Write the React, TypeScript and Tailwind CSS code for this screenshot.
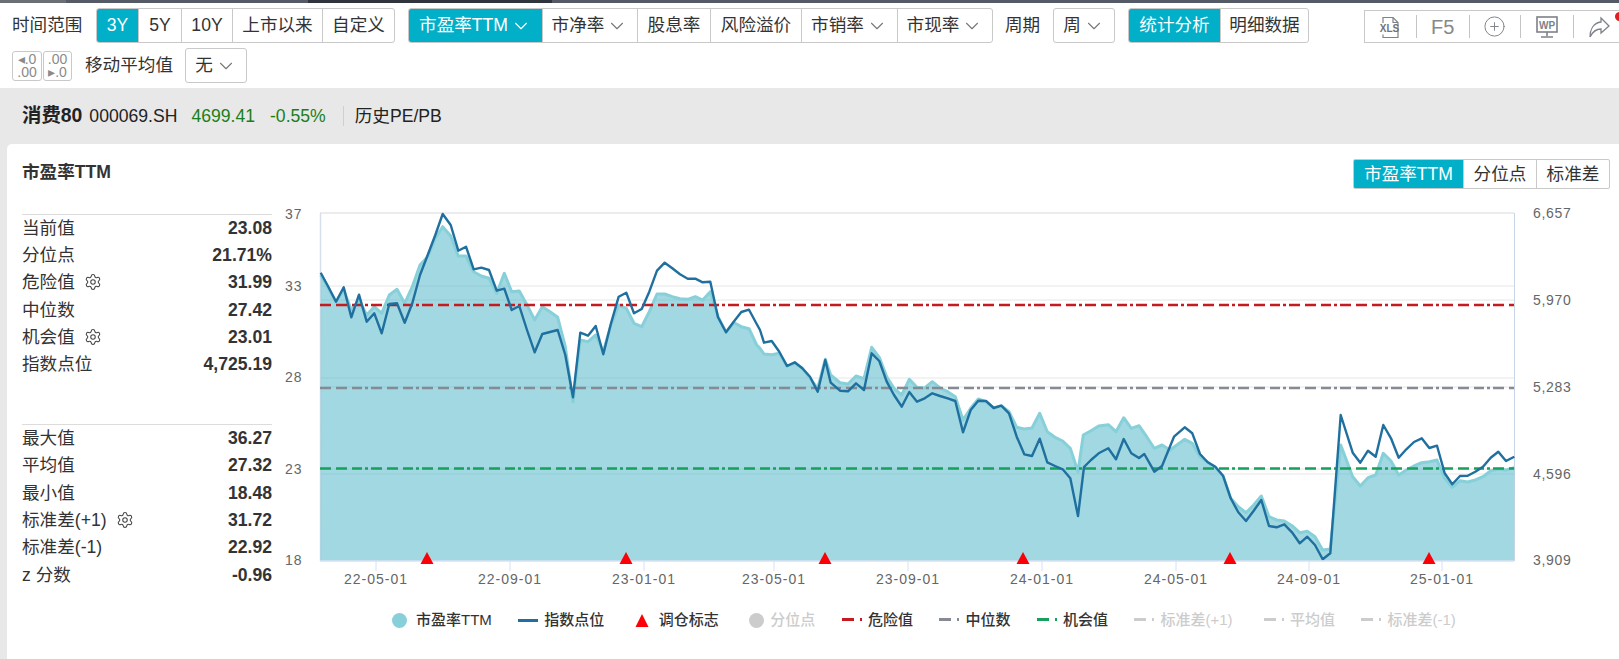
import { ChevronDown, CirclePlus, Settings } from "lucide-react";

type Pt = [number, number];

// traced from the picture, in crop coordinates (3x)
const LINE_A: Pt[] = [[32,218],[55,260],[78,305],[101,262],[124,352],[147,284],[170,365],[193,340],[215,400],[238,312],[261,310],[284,368],[307,310],[330,225],[353,165],[376,105],[398,42],[422,75],[445,152],[468,140],[491,208],[514,203],[537,210],[560,272],[583,266],[605,330],[628,318],[651,390],[674,457],[697,402],[720,396],[743,390],[766,465],[789,592],[811,398],[834,407],[857,378],[880,463],[903,370],[926,290],[949,278],[972,340],[995,327],[1018,275],[1041,212],[1064,188],[1087,205],[1110,223],[1133,236],[1156,236],[1178,247],[1201,245],[1224,352],[1248,397],[1271,365],[1294,336],[1317,329],[1340,372]];
const LINE_B: Pt[] = [[0,150],[12,188],[35,183],[58,215],[81,258],[104,247],[127,265],[150,290],[173,335],[196,240],[212,308],[240,332],[264,334],[288,310],[312,330],[335,220],[358,243],[380,305],[402,345],[425,380],[448,336],[471,365],[494,355],[517,340],[540,348],[563,355],[586,363],[609,457],[632,390],[655,362],[678,363],[701,384],[724,377],[747,400],[770,470],[793,523],[816,528],[839,476],[862,547],[885,558],[908,568],[931,595],[954,708],[972,561],[993,540],[1016,520],[1045,505],[1068,538],[1091,477],[1114,520],[1137,534],[1153,522],[1183,575],[1206,558]];
const LINE_C: Pt[] = [[12,170],[44,142],[67,160],[90,222],[113,247],[136,260],[159,287],[182,355],[205,397],[228,423],[251,392],[274,360],[297,438],[320,442],[343,433],[366,457],[389,490],[412,470],[435,495],[458,538],[481,520],[512,105],[548,218],[571,248],[594,212],[617,230],[640,135],[663,175],[686,233],[709,208],[732,186],[755,175],[778,204],[801,197],[824,280],[847,313],[870,288],[893,287],[916,275],[939,260],[962,233],[985,215],[1008,243],[1033,230]];

const AREA_A: Pt[] = [[32,225],[55,265],[78,305],[101,270],[124,330],[147,300],[170,345],[193,320],[215,340],[238,285],[261,268],[284,310],[307,260],[330,195],[353,170],[376,115],[398,80],[422,108],[445,168],[468,168],[491,215],[514,228],[537,235],[560,280],[583,220],[605,275],[628,273],[651,315],[674,360],[697,320],[720,335],[743,352],[766,440],[789,605],[811,420],[834,425],[857,405],[880,455],[903,375],[926,315],[949,325],[972,370],[995,380],[1018,335],[1041,282],[1064,282],[1087,290],[1110,296],[1133,298],[1156,290],[1178,300],[1201,275],[1224,350],[1248,397],[1271,368],[1294,380],[1317,386],[1340,435]];
const AREA_B: Pt[] = [[0,205],[12,222],[35,224],[58,220],[81,258],[104,250],[127,265],[150,295],[173,325],[196,238],[212,285],[240,308],[264,312],[288,288],[312,296],[335,202],[358,232],[380,290],[402,325],[425,345],[448,298],[471,322],[494,324],[517,305],[540,324],[563,335],[586,350],[609,420],[632,385],[655,357],[678,365],[701,384],[724,377],[747,395],[770,442],[793,447],[816,444],[839,400],[862,455],[885,472],[908,483],[931,505],[954,575],[970,465],[993,452],[1016,438],[1045,434],[1068,455],[1091,413],[1114,445],[1137,437],[1160,470],[1183,505],[1206,495]];
const AREA_C: Pt[] = [[0,210],[44,178],[67,190],[90,230],[113,247],[136,262],[159,287],[182,355],[205,380],[228,398],[251,375],[274,348],[297,410],[320,420],[343,423],[366,437],[389,458],[412,454],[435,470],[458,510],[481,507],[512,195],[548,290],[571,318],[594,293],[617,285],[640,220],[663,243],[686,285],[709,270],[732,258],[755,248],[778,245],[801,240],[824,295],[847,322],[870,302],[893,306],[916,300],[939,290],[962,272],[985,268],[1008,270],[1033,263]];

const toPage = (pts: Pt[], ox: number, oy: number): Pt[] =>
  pts.map(([x, y]) => [ox + x / 3, oy + y / 3]);
const joined = (pts: Pt[]) => pts.map(([x, y]) => `${x.toFixed(1)},${y.toFixed(1)}`).join(" ");

const linePts = [...toPage(LINE_A, 310, 200), ...toPage(LINE_B, 760, 280), ...toPage(LINE_C, 1170, 380)];
const areaPts = [...toPage(AREA_A, 310, 200), ...toPage(AREA_B, 760, 280), ...toPage(AREA_C, 1170, 380)];

const TEAL = "bg-[#01afc9] text-white";
const DASH = "11 5 11 5 10 3 3 3";

const TICKS = [
  { x: 376, label: "22-05-01" },
  { x: 510, label: "22-09-01" },
  { x: 644, label: "23-01-01" },
  { x: 774, label: "23-05-01" },
  { x: 908, label: "23-09-01" },
  { x: 1042, label: "24-01-01" },
  { x: 1176, label: "24-05-01" },
  { x: 1309, label: "24-09-01" },
  { x: 1442, label: "25-01-01" },
];
const LEFT_AXIS = [
  { y: 214, label: "37" },
  { y: 286, label: "33" },
  { y: 377, label: "28" },
  { y: 469, label: "23" },
  { y: 560, label: "18" },
];
const RIGHT_AXIS = [
  { y: 213, label: "6,657" },
  { y: 300, label: "5,970" },
  { y: 387, label: "5,283" },
  { y: 474, label: "4,596" },
  { y: 560, label: "3,909" },
];
const MARKERS = [427, 626, 825, 1023, 1230, 1429];

const STATS_TOP = [
  { label: "当前值", value: "23.08" },
  { label: "分位点", value: "21.71%" },
  { label: "危险值", value: "31.99", gear: true },
  { label: "中位数", value: "27.42" },
  { label: "机会值", value: "23.01", gear: true },
  { label: "指数点位", value: "4,725.19" },
];
const STATS_BOTTOM = [
  { label: "最大值", value: "36.27" },
  { label: "平均值", value: "27.32" },
  { label: "最小值", value: "18.48" },
  { label: "标准差(+1)", value: "31.72", gear: true },
  { label: "标准差(-1)", value: "22.92" },
  { label: "z 分数", value: "-0.96" },
];

function Btn({ w, active, caret, children }: { w: string; active?: boolean; caret?: boolean; children: React.ReactNode }) {
  return (
    <div
      className={`flex h-full shrink-0 items-center justify-center gap-[2px] border-l border-[#c9c9c9] first:border-l-0 ${w} ${
        active ? TEAL : "text-[#333]"
      }`}
    >
      <span>{children}</span>
      {caret && <ChevronDown size={22} strokeWidth={1.2} className={active ? "text-white" : "text-[#777]"} />}
    </div>
  );
}

function Group({ children }: { children: React.ReactNode }) {
  return (
    <div className="flex h-[35px] shrink-0 overflow-hidden rounded-[3px] border border-[#c9c9c9] bg-white">{children}</div>
  );
}

function StatRows({ rows }: { rows: { label: string; value: string; gear?: boolean }[] }) {
  return (
    <div className="border-t border-[#dcdcdc]">
      {rows.map((r) => (
        <div key={r.label} className="flex h-[27.4px] items-center justify-between pb-[2px] text-[#333]">
          <span className="flex items-center">
            {r.label}
            {r.gear && <Settings size={18} strokeWidth={1.4} className="ml-[9px] text-[#444]" />}
          </span>
          <span className="font-bold">{r.value}</span>
        </div>
      ))}
    </div>
  );
}

function DashSwatch({ color }: { color: string }) {
  return (
    <svg width="20" height="4" className="shrink-0">
      <rect x="0" y="0" width="12" height="3" fill={color} />
      <rect x="18" y="0" width="2" height="3" fill={color} />
    </svg>
  );
}

function LegendItem({ swatch, label, off, labelClass }: { swatch: React.ReactNode; label: string; off?: boolean; labelClass?: string }) {
  return (
    <div className={`flex shrink-0 items-center gap-[6px] font-medium ${off ? "text-[#ccc]" : "text-[#333]"}`}>
      {swatch}
      <span className={labelClass}>{label}</span>
    </div>
  );
}

function ToolDivider() {
  return <div className="h-[23px] w-px shrink-0 bg-[#c4c4c4]" />;
}

function Toolbox() {
  return (
    <div className="relative ml-[55px] mt-[2px] flex h-[33px] w-[260px] shrink-0 items-center border border-[#c9c9c9] text-[#7d8289]">
      <div className="flex w-[52px] justify-center">
        <svg width="24" height="24" viewBox="0 0 24 24" fill="none" stroke="#7d8289" strokeWidth="1.2">
          <path d="M5 8V2.5h10l5 5v15H5v-3" />
          <path d="M15 2.5v5h5" />
          <text x="11.5" y="17" textAnchor="middle" fontSize="10" fontWeight="700" stroke="none" fill="#6f747b" fontFamily="Liberation Sans">XLS</text>
        </svg>
      </div>
      <ToolDivider />
      <div className="flex w-[53px] justify-center text-[20px] leading-none text-[#888]">F5</div>
      <ToolDivider />
      <div className="flex w-[52px] justify-center">
        <CirclePlus size={23} strokeWidth={1} />
      </div>
      <ToolDivider />
      <div className="flex w-[53px] justify-center">
        <svg width="24" height="24" viewBox="0 0 24 24" fill="none" stroke="#7d8289" strokeWidth="1.6">
          <rect x="2" y="2" width="20" height="15" />
          <path d="M12 17v4M6 22h12" />
          <text x="12" y="14" textAnchor="middle" fontSize="10" fontWeight="700" stroke="none" fill="#7d8289" fontFamily="Liberation Sans">WP</text>
        </svg>
      </div>
      <ToolDivider />
      <div className="flex w-[50px] justify-center">
        <svg width="24" height="24" viewBox="0 0 24 24" fill="none" stroke="#7d8289" strokeWidth="1.3">
          <path d="M14 3l8 8-8 7v-4c-5 0-8 2-11 8 0-7 3-14 11-15V3z" />
        </svg>
      </div>
      <div className="absolute left-[250px] top-[1px] h-[9px] w-[9px] rounded-full bg-[#e02020]" />
    </div>
  );
}

function Chart() {
  return (
    <svg width="1332" height="405" viewBox="280 200 1332 405" className="block shrink-0">
      <line x1="320" x2="1514" y1="213" y2="213" stroke="#e6e6e6" strokeWidth="1.5" />
      {[286, 300, 378, 387, 469, 474].map((y) => (
        <line key={y} x1="320" x2="1514" y1={y} y2={y} stroke="#e6e6e6" strokeWidth="1" />
      ))}
      <line x1="320.5" x2="320.5" y1="213" y2="561" stroke="#d5e0ec" strokeWidth="1.5" />
      <line x1="1514.5" x2="1514.5" y1="213" y2="561" stroke="#c8d5e8" strokeWidth="1" />
      <polygon points={`320.5,561 ${joined(areaPts)} 1514,561`} fill="#4db6c6" fillOpacity="0.53" />
      <polyline points={joined(areaPts)} fill="none" stroke="#87d0d9" strokeWidth="3" strokeLinejoin="round" />
      <line x1="320" x2="1514" y1="305" y2="305" stroke="#c41a20" strokeWidth="2.4" strokeDasharray={DASH} />
      <line x1="320" x2="1514" y1="388" y2="388" stroke="#868a92" strokeWidth="2.4" strokeDasharray={DASH} />
      <line x1="320" x2="1514" y1="468.5" y2="468.5" stroke="#15a05c" strokeWidth="2.4" strokeDasharray={DASH} />
      <polyline points={joined(linePts)} fill="none" stroke="#1f6f9f" strokeWidth="2.4" strokeLinejoin="round" />
      <line x1="320" x2="1514" y1="561" y2="561" stroke="#d8e0f0" strokeWidth="1.5" />
      {TICKS.map((t) => (
        <g key={t.label}>
          <line x1={t.x} x2={t.x} y1="561" y2="571" stroke="#d8e0f0" strokeWidth="1" />
          <text x={t.x} y="584" textAnchor="middle" fontSize="14" letterSpacing="1" fill="#666">
            {t.label}
          </text>
        </g>
      ))}
      {LEFT_AXIS.map((t) => (
        <text key={t.label} x="285" y={t.y + 5} fontSize="14" letterSpacing="1" fill="#666">
          {t.label}
        </text>
      ))}
      {RIGHT_AXIS.map((t) => (
        <text key={t.label} x="1533" y={t.y + 5} fontSize="14" letterSpacing="0.7" fill="#666">
          {t.label}
        </text>
      ))}
      {MARKERS.map((x) => (
        <polygon key={x} points={`${x},552 ${x + 6.5},564 ${x - 6.5},564`} fill="#fb0007" />
      ))}
    </svg>
  );
}

export default function App() {
  return (
    <div className="flex h-[659px] w-full flex-col overflow-hidden bg-white font-['Liberation_Sans','Noto_Sans_CJK_SC',sans-serif] text-[17.6px]">
      <div className="flex h-[3px] shrink-0">
        <div className="w-[66px] bg-[#6a6e75]" />
        <div className="w-[242px] bg-[#555b66]" />
        <div className="w-[244px] bg-[#30343c]" />
        <div className="flex-1 bg-[#555b66]" />
      </div>

      {/* toolbar */}
      <div className="shrink-0 px-[12px] pt-[5px] pb-[5px]">
        <div className="flex h-[35px] items-center whitespace-nowrap">
          <span className="mr-[15px] w-[69px] shrink-0 text-[#333]">时间范围</span>
          <Group>
            <Btn w="w-[41px]" active>3Y</Btn>
            <Btn w="w-[43px]">5Y</Btn>
            <Btn w="w-[51px]">10Y</Btn>
            <Btn w="w-[90px]">上市以来</Btn>
            <Btn w="w-[72px]">自定义</Btn>
          </Group>
          <div className="ml-[13px] shrink-0">
            <Group>
              <Btn w="w-[133px]" active caret>市盈率TTM</Btn>
              <Btn w="w-[95px]" caret>市净率</Btn>
              <Btn w="w-[73px]">股息率</Btn>
              <Btn w="w-[91px]">风险溢价</Btn>
              <Btn w="w-[96px]" caret>市销率</Btn>
              <Btn w="w-[95px]" caret>市现率</Btn>
            </Group>
          </div>
          <span className="mx-[12px] w-[36px] shrink-0 text-[#333]">周期</span>
          <Group>
            <Btn w="w-[60px]" caret>周</Btn>
          </Group>
          <div className="ml-[13px] shrink-0">
            <Group>
              <Btn w="w-[91px]" active>统计分析</Btn>
              <Btn w="w-[88px]">明细数据</Btn>
            </Group>
          </div>
          <Toolbox />
        </div>
        <div className="mt-[5px] flex h-[35px] items-center whitespace-nowrap">
          <div className="flex gap-px text-[14px] leading-[13px] text-[#8a8a8a]">
            <div className="flex h-[30px] w-[30px] flex-col items-center justify-center rounded-[3px] border border-[#c9c9c9]">
              <span>◂.0</span>
              <span>.00</span>
            </div>
            <div className="flex h-[30px] w-[29px] flex-col items-center justify-center rounded-[3px] border border-[#c9c9c9]">
              <span>.00</span>
              <span>▸.0</span>
            </div>
          </div>
          <span className="ml-[13px] mr-[13px] w-[87px] text-[#333]">移动平均值</span>
          <Group>
            <Btn w="w-[60px]" caret>无</Btn>
          </Group>
        </div>
      </div>

      {/* gray area */}
      <div className="flex min-h-0 flex-1 flex-col bg-[#e8e8e8] pl-[7px]">
        <div className="flex h-[56px] shrink-0 items-center whitespace-nowrap pl-[15px] text-[#333]">
          <span className="text-[19.4px] font-bold text-[#222]">消费80</span>
          <span className="ml-[7px] text-[#222]">000069.SH</span>
          <span className="ml-[14px] text-[#1a7f1a]">4699.41</span>
          <span className="ml-[15px] text-[#1a7f1a]">-0.55%</span>
          <div className="ml-[17px] mr-[11px] h-[20px] w-px bg-[#cfcfcf]" />
          <span className="text-[#222]">历史PE/PB</span>
        </div>

        <div className="min-h-0 flex-1 rounded-tl-[5px] bg-white">
          <div className="flex h-[56px] items-start justify-between pl-[15px] pr-[9px] pt-[15px]">
            <span className="mt-[1px] font-bold leading-[24px] text-[#333]">市盈率TTM</span>
            <div className="flex h-[30px] overflow-hidden rounded-[2px] border border-[#c9c9c9]">
              <Btn w="w-[109px]" active>市盈率TTM</Btn>
              <Btn w="w-[73px]">分位点</Btn>
              <Btn w="w-[73px]">标准差</Btn>
            </div>
          </div>
          <div className="flex">
            <div className="ml-[15px] mr-[8px] w-[250px] shrink-0 pt-[14px]">
              <StatRows rows={STATS_TOP} />
              <div className="mt-[45px]">
                <StatRows rows={STATS_BOTTOM} />
              </div>
            </div>
            <Chart />
          </div>
          <div className="ml-[385px] flex h-[30px] items-center gap-[26.5px] whitespace-nowrap text-[15px]">
            <div className="flex shrink-0 items-center gap-[9px] font-medium text-[#333]">
              <div className="h-[15px] w-[15px] rounded-full bg-[#87d0d9]" />
              <span>市盈率TTM</span>
            </div>
            <LegendItem label="指数点位" swatch={<div className="h-[3px] w-[20px] bg-[#1f6f9f]" />} />
            <LegendItem
              label="调仓标志"
              swatch={
                <svg width="22" height="13" viewBox="0 0 22 13" className="shrink-0">
                  <polygon points="11,0 17.5,13 4.5,13" fill="#fb0007" />
                </svg>
              }
            />
            <LegendItem off label="分位点" swatch={<div className="ml-[4px] h-[15px] w-[15px] rounded-full bg-[#ccc]" />} />
            <LegendItem label="危险值" swatch={<DashSwatch color="#c41a20" />} />
            <LegendItem label="中位数" swatch={<DashSwatch color="#868a92" />} />
            <LegendItem label="机会值" swatch={<DashSwatch color="#15a05c" />} />
            <LegendItem off label="标准差(+1)" labelClass="inline-block w-[77px]" swatch={<DashSwatch color="#ccc" />} />
            <LegendItem off label="平均值" swatch={<DashSwatch color="#ccc" />} />
            <LegendItem off label="标准差(-1)" labelClass="inline-block w-[75px]" swatch={<DashSwatch color="#ccc" />} />
          </div>
        </div>
      </div>
    </div>
  );
}
